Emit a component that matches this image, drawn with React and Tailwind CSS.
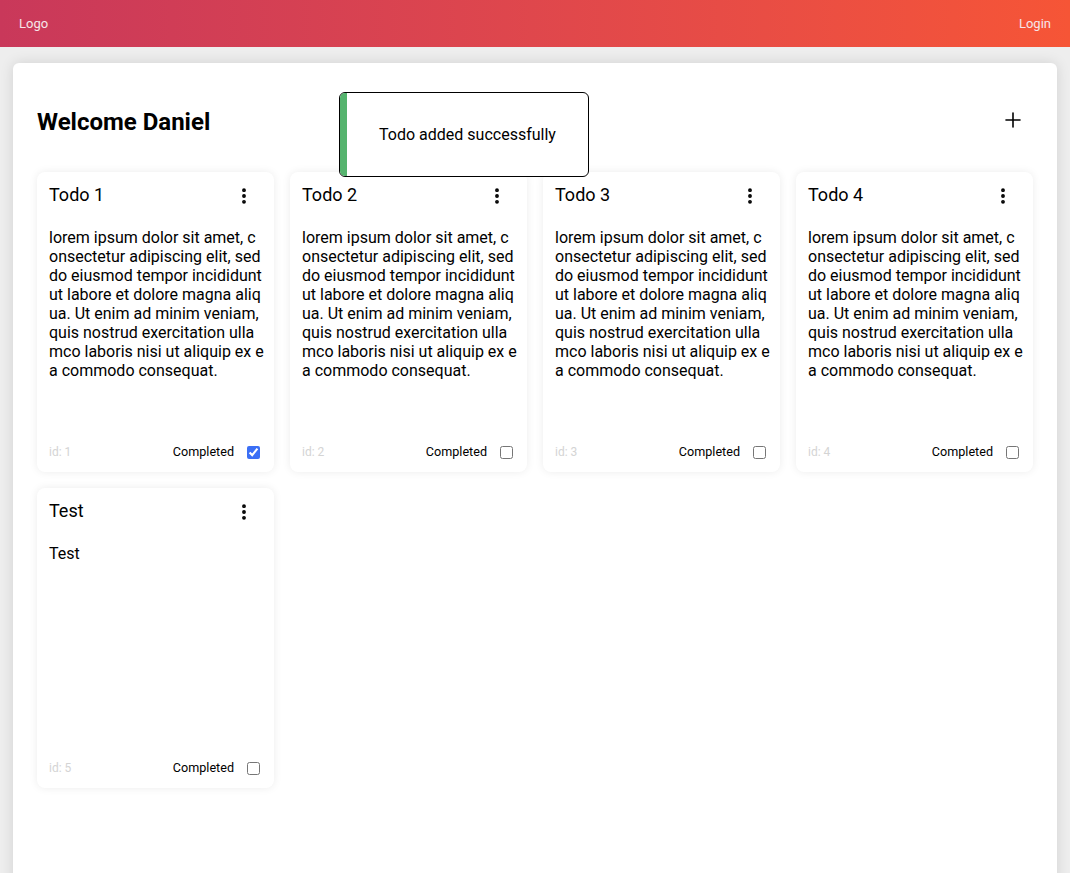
import React from 'react';
import { EllipsisVertical, Plus } from 'lucide-react';

// wrapped the way the original renders it (break-all at 213px)
const lorem = [
  'lorem ipsum dolor sit amet, c',
  'onsectetur adipiscing elit, sed',
  'do eiusmod tempor incididunt',
  'ut labore et dolore magna aliq',
  'ua. Ut enim ad minim veniam,',
  'quis nostrud exercitation ulla',
  'mco laboris nisi ut aliquip ex e',
  'a commodo consequat.',
];

const todos = [
  { id: 1, title: 'Todo 1', body: lorem, done: true },
  { id: 2, title: 'Todo 2', body: lorem, done: false },
  { id: 3, title: 'Todo 3', body: lorem, done: false },
  { id: 4, title: 'Todo 4', body: lorem, done: false },
  { id: 5, title: 'Test', body: ['Test'], done: false },
];

const TodoCard = ({ todo }) => (
  <div className="h-[300px] bg-white rounded-lg shadow-[0_0_8px_rgba(0,0,0,0.08)] flex flex-col px-3 pt-3 pb-3">
    <div className="h-5 flex items-center justify-between">
      <h3 className="text-[18px] font-normal leading-none mt-[2px]">{todo.title}</h3>
      <EllipsisVertical className="w-5 h-5 mr-[8px] mt-[4px]" strokeWidth={2.6} />
    </div>
    <p className="mt-6 text-[16px] leading-[19px] whitespace-nowrap">
      {todo.body.map((line, i) => (
        <span key={i} className="block">{line}</span>
      ))}
    </p>
    <div className="mt-auto flex items-center justify-between h-4">
      <span className="text-[12px] text-[#d4d4d4]">id: {todo.id}</span>
      <label className="flex items-center gap-[10px] text-[12.6px]">
        Completed
        <input type="checkbox" defaultChecked={todo.done} className="m-[3px] mr-[2px] w-[13px] h-[13px] accent-[#3b6ff5]" />
      </label>
    </div>
  </div>
);

export default function App() {
  return (
    <div className="h-screen overflow-hidden bg-[#eeeeee] text-black" style={{ fontFamily: 'Roboto, "Noto Sans", sans-serif' }}>
      <header className="h-[47px] flex items-center justify-between px-[19px] bg-gradient-to-r from-[#c9385a] to-[#f65536] text-[13px] text-[#f6e6ea]">
        <span>Logo</span>
        <span>Login</span>
      </header>

      <main className="relative mx-[13px] mt-4 h-[840px] bg-white rounded-md shadow-[0_0_14px_rgba(0,0,0,0.12)] p-6">
        <div className="h-[69px] flex items-center justify-between mb-4">
          <h1 className="text-[24px] font-bold">Welcome Daniel</h1>
          <Plus className="w-6 h-6 mr-[8px] mb-[4px]" strokeWidth={1.6} />
        </div>

        <div className="grid grid-cols-4 gap-4">
          {todos.map((t) => (
            <TodoCard key={t.id} todo={t} />
          ))}
        </div>

        <div className="absolute left-[326px] top-[29px] w-[250px] h-[85px] bg-white border border-black rounded-md overflow-hidden flex">
          <div className="w-[7px] bg-[#55b46e]" />
          <div className="flex-1 flex items-center justify-center text-[16px]">Todo added successfully</div>
        </div>
      </main>
    </div>
  );
}
